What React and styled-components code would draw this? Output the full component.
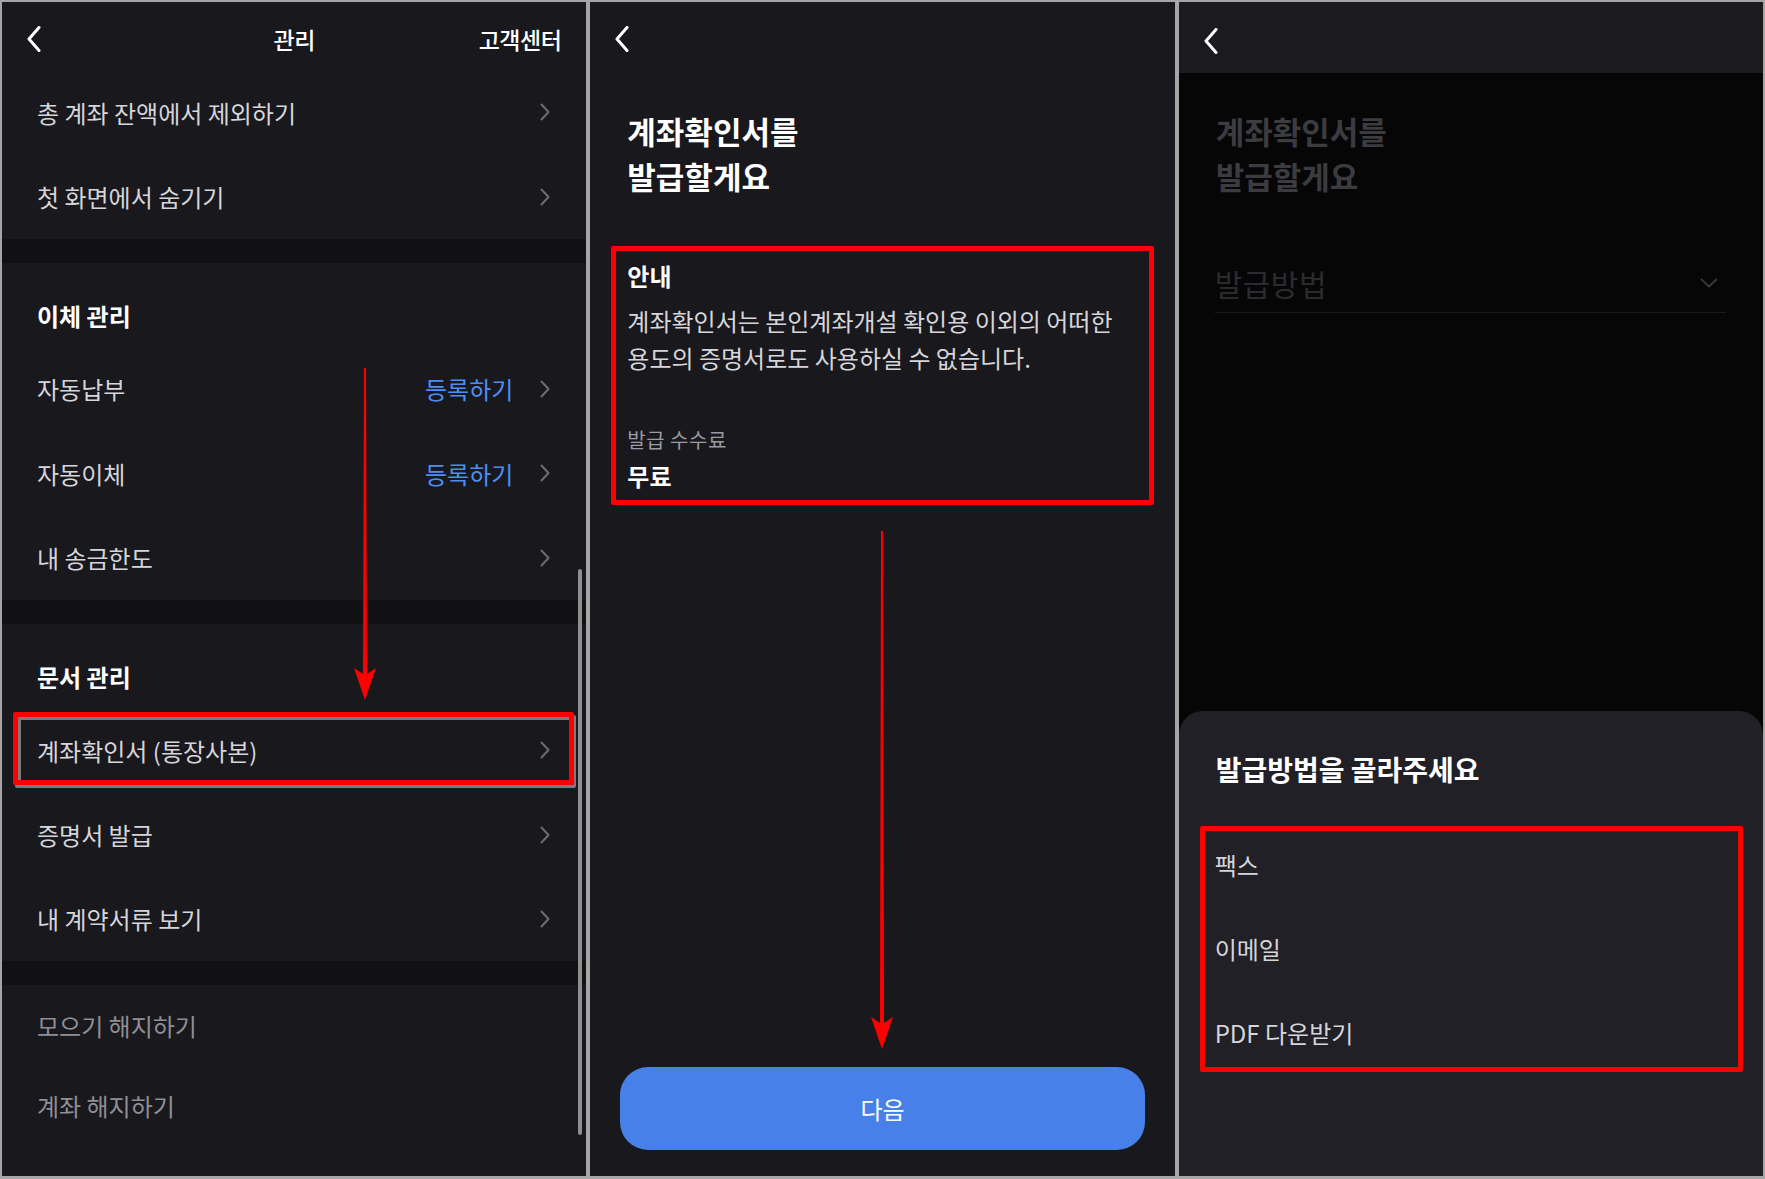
import React from 'react';
import styled, { createGlobalStyle } from 'styled-components';

const GlobalStyle = createGlobalStyle`
  html, body {
    margin: 0;
    padding: 0;
    background: #a5a5a5;
  }
  * { box-sizing: border-box; }
`;

const FONT = `"Noto Sans CJK KR", "Noto Sans", sans-serif`;

const Frame = styled.div`
  width: 1765px;
  height: 1179px;
  display: flex;
  gap: 4px;
  padding: 2px 2px 3px 2px;
  background: #a5a5a5;
  font-family: ${FONT};
`;

const Panel = styled.div`
  flex: 1;
  position: relative;
  display: flex;
  flex-direction: column;
  overflow: hidden;
  background: ${(p) => p.$bg || '#18181d'};
`;

const Header = styled.div`
  height: ${(p) => p.$h || 68}px;
  flex-shrink: 0;
  display: grid;
  grid-template-columns: 1fr auto 1fr;
  align-items: center;
  padding: 6px 25px 0;
  background: ${(p) => p.$bg || 'transparent'};
`;

const HeaderTitle = styled.div`
  color: #fff;
  font-size: 23px;
  font-weight: 500;
  letter-spacing: -0.5px;
`;

const HeaderLink = styled.div`
  justify-self: end;
  color: #fff;
  font-size: 23px;
  font-weight: 500;
  letter-spacing: -0.5px;
`;

const BackButton = () => (
  <svg width="14" height="26" viewBox="0 0 14 26">
    <polyline points="12,1.5 2,13 12,24.5" fill="none" stroke="#fff" strokeWidth="3" strokeLinecap="round" strokeLinejoin="round" />
  </svg>
);

const Chevron = () => (
  <svg width="10" height="18" viewBox="0 0 10 18">
    <polyline points="1.5,1.5 8.5,9 1.5,16.5" fill="none" stroke="#6c6c73" strokeWidth="2" strokeLinecap="round" strokeLinejoin="round" />
  </svg>
);

const ChevronDown = () => (
  <svg width="18" height="10" viewBox="0 0 18 10">
    <polyline points="1.5,1.5 9,8.5 16.5,1.5" fill="none" stroke="#36363b" strokeWidth="2" strokeLinecap="round" strokeLinejoin="round" />
  </svg>
);

const Row = styled.div`
  position: relative;
  height: ${(p) => p.$h || 84.4}px;
  flex-shrink: 0;
  display: flex;
  align-items: center;
  padding: 0 36px 0 35px;
  font-size: 24px;
  color: ${(p) => (p.$dim ? '#8f8f95' : '#d5d5da')};
`;

const RowLabel = styled.span`
  flex: 1;
`;

const RowAction = styled.span`
  color: #4c8ef5;
  margin-right: 27px;
`;

const Band = styled.div`
  height: 24px;
  flex-shrink: 0;
  background: #111114;
`;

const SectionTitle = styled.div`
  height: 84px;
  flex-shrink: 0;
  display: flex;
  align-items: flex-end;
  padding: 0 35px 16px;
  font-size: 24px;
  line-height: 30px;
  font-weight: 700;
  color: #fff;
`;

const Highlight = styled.div`
  position: absolute;
  left: 11px;
  right: 12px;
  top: 4px;
  bottom: 7px;
  border: 5px solid #ff0000;
  box-shadow: inset 3px 3px 0 #7b7b7b, 2px 3px 0 #7b7b7b;
  border-radius: 2px;
  pointer-events: none;
`;

const Scrollbar = styled.div`
  position: absolute;
  right: 4px;
  top: 567px;
  width: 4px;
  height: 566px;
  border-radius: 2px;
  background: #8f8f8f;
`;

const ArrowWrap = styled.svg`
  position: absolute;
  left: ${(p) => p.$x}px;
  top: ${(p) => p.$y}px;
  overflow: visible;
`;

const Arrow = ({ x, y, h }) => (
  <ArrowWrap $x={x} $y={y} width="26" height={h} viewBox={`0 0 26 ${h}`}>
    <polygon
      points={`12,0 14,0 15,${h - 26} 24,${h - 32} 13,${h} 2,${h - 32} 11,${h - 26}`}
      fill="#ff0000"
    />
  </ArrowWrap>
);

const BigTitle = styled.h1`
  margin: ${(p) => p.$top || 38}px 0 0;
  padding: 0 37px;
  font-size: 31px;
  line-height: 45px;
  font-weight: 700;
  color: ${(p) => (p.$dim ? '#3b3b40' : '#fff')};
`;

const InfoBox = styled.div`
  margin: 48px 21px 0;
  border: 5px solid #ff0000;
  border-radius: 2px;
  padding: 10px 11px 9px;
`;

const InfoHead = styled.div`
  font-size: 24px;
  line-height: 30px;
  font-weight: 700;
  color: #fff;
`;

const InfoText = styled.p`
  margin: 11px 0 0;
  font-size: 24px;
  line-height: 37px;
  color: #d5d5da;
`;

const FeeLabel = styled.div`
  margin-top: 51px;
  font-size: 20px;
  line-height: 26px;
  letter-spacing: 0.5px;
  color: #9b9ba1;
`;

const FeeValue = styled.div`
  margin-top: 8px;
  font-size: 24px;
  line-height: 30px;
  font-weight: 700;
  color: #fff;
`;

const NextButton = styled.button`
  margin: auto 30px 26px;
  height: 83px;
  flex-shrink: 0;
  border: none;
  border-radius: 28px;
  background: #4880ea;
  color: #fff;
  font-family: ${FONT};
  font-size: 24px;
`;

const SelectField = styled.div`
  margin: 55px 37px 0 36px;
  height: 60px;
  display: flex;
  align-items: center;
  justify-content: space-between;
  padding-right: 8px;
  border-bottom: 1px solid #19191c;
  font-size: 30px;
  letter-spacing: 0.5px;
  color: #2b2b2f;
`;

const Sheet = styled.div`
  margin-top: auto;
  height: 465px;
  flex-shrink: 0;
  background: #202026;
  border-radius: 24px 24px 0 0;
  padding-top: 41px;
`;

const SheetTitle = styled.div`
  padding: 0 37px;
  font-size: 28px;
  line-height: 34px;
  font-weight: 700;
  color: #fff;
`;

const OptionList = styled.div`
  position: relative;
  margin-top: 36px;
`;

const Option = styled.div`
  height: 84px;
  display: flex;
  align-items: center;
  padding: 0 36px;
  font-size: 24px;
  color: #d5d5da;
`;

const OptionFrame = styled.div`
  position: absolute;
  left: 21px;
  right: 20px;
  top: 4px;
  bottom: 2px;
  border: 5px solid #ff0000;
  border-radius: 2px;
`;

const ManagePanel = () => (
  <Panel>
    <Header>
      <BackButton />
      <HeaderTitle>관리</HeaderTitle>
      <HeaderLink>고객센터</HeaderLink>
    </Header>
    <Row><RowLabel>총 계좌 잔액에서 제외하기</RowLabel><Chevron /></Row>
    <Row><RowLabel>첫 화면에서 숨기기</RowLabel><Chevron /></Row>
    <Band />
    <SectionTitle>이체 관리</SectionTitle>
    <Row><RowLabel>자동납부</RowLabel><RowAction>등록하기</RowAction><Chevron /></Row>
    <Row><RowLabel>자동이체</RowLabel><RowAction>등록하기</RowAction><Chevron /></Row>
    <Row><RowLabel>내 송금한도</RowLabel><Chevron /></Row>
    <Band />
    <SectionTitle>문서 관리</SectionTitle>
    <Row>
      <RowLabel>계좌확인서 (통장사본)</RowLabel><Chevron />
      <Highlight />
    </Row>
    <Row><RowLabel>증명서 발급</RowLabel><Chevron /></Row>
    <Row><RowLabel>내 계약서류 보기</RowLabel><Chevron /></Row>
    <Band />
    <Row $dim $h={80}><RowLabel>모으기 해지하기</RowLabel></Row>
    <Row $dim $h={80}><RowLabel>계좌 해지하기</RowLabel></Row>
    <Scrollbar />
    <Arrow x={350} y={366} h={332} />
  </Panel>
);

const IssuePanel = () => (
  <Panel>
    <Header>
      <BackButton />
    </Header>
    <BigTitle>계좌확인서를<br />발급할게요</BigTitle>
    <InfoBox>
      <InfoHead>안내</InfoHead>
      <InfoText>계좌확인서는 본인계좌개설 확인용 이외의 어떠한<br />용도의 증명서로도 사용하실 수 없습니다.</InfoText>
      <FeeLabel>발급 수수료</FeeLabel>
      <FeeValue>무료</FeeValue>
    </InfoBox>
    <NextButton>다음</NextButton>
    <Arrow x={279} y={529} h={518} />
  </Panel>
);

const MethodPanel = () => (
  <Panel $bg="#060607">
    <Header $bg="#1a1a1f" $h={71}>
      <BackButton />
    </Header>
    <BigTitle $dim $top={35}>계좌확인서를<br />발급할게요</BigTitle>
    <SelectField>
      <span>발급방법</span>
      <ChevronDown />
    </SelectField>
    <Sheet>
      <SheetTitle>발급방법을 골라주세요</SheetTitle>
      <OptionList>
        <Option>팩스</Option>
        <Option>이메일</Option>
        <Option>PDF 다운받기</Option>
        <OptionFrame />
      </OptionList>
    </Sheet>
  </Panel>
);

const App = () => (
  <>
    <GlobalStyle />
    <Frame>
      <ManagePanel />
      <IssuePanel />
      <MethodPanel />
    </Frame>
  </>
);

export default App;
